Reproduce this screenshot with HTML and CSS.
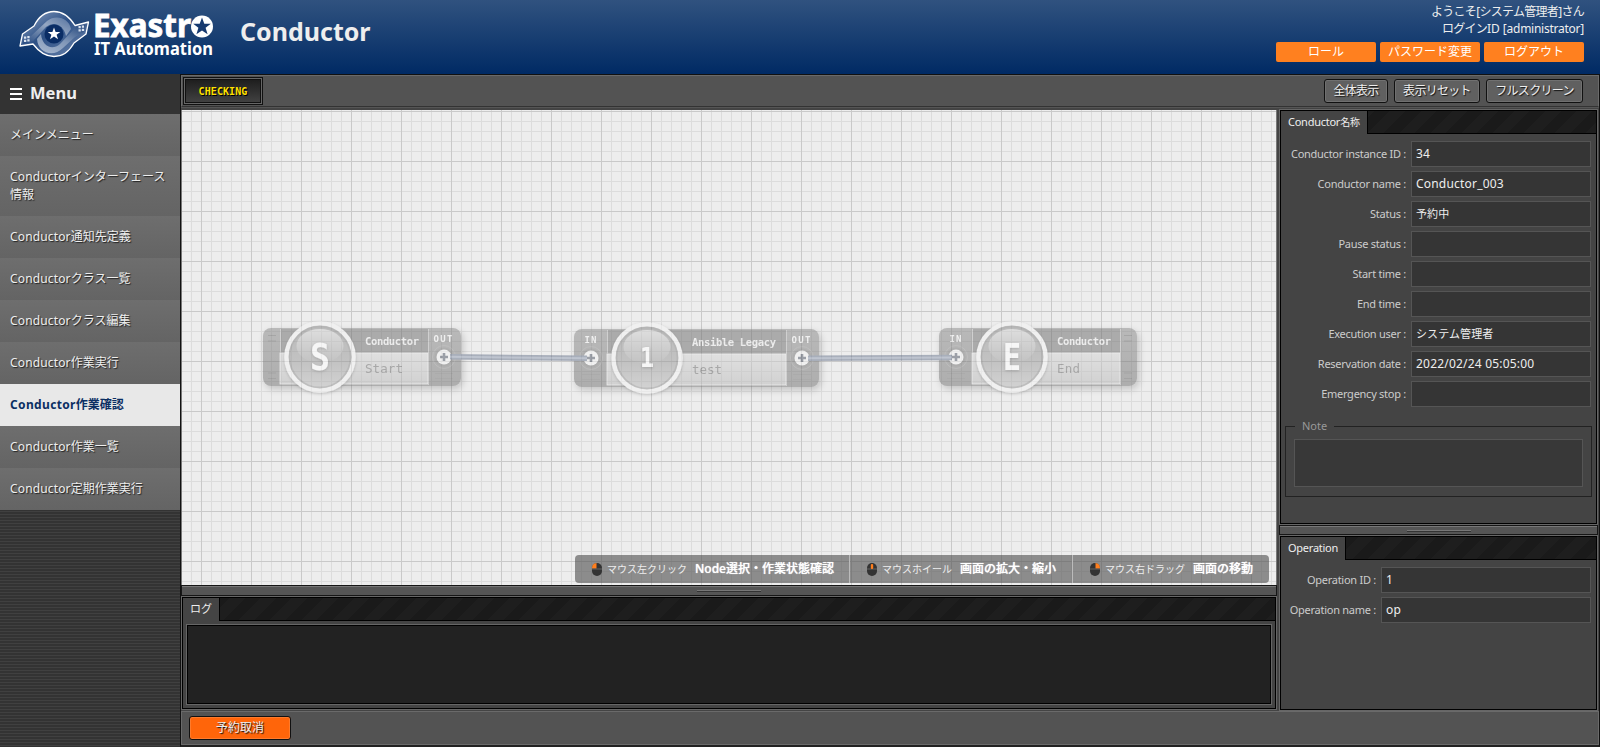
FILE: index.html
```html
<!DOCTYPE html>
<html lang="ja">
<head>
<meta charset="utf-8">
<title>Conductor</title>
<link rel="stylesheet" href="styles.css">
</head>
<body>
<header class="header">
  <svg class="logo" width="220" height="74" viewBox="0 0 220 74">
    <defs>
      <linearGradient id="lg1" x1="0" y1="0" x2="1" y2="1"><stop offset="0" stop-color="#8da3c4"/><stop offset=".45" stop-color="#2d5085"/><stop offset="1" stop-color="#7089b0"/></linearGradient>
      <linearGradient id="lg2" x1="0" y1="1" x2="1" y2="0"><stop offset="0" stop-color="#c3cfdf"/><stop offset=".5" stop-color="#8fa3c0"/><stop offset="1" stop-color="#173c74"/></linearGradient>
      <linearGradient id="lg3" x1="0" y1="1" x2="1" y2="0"><stop offset="0" stop-color="#1d427b"/><stop offset=".6" stop-color="#a9b8ce"/><stop offset="1" stop-color="#5f7ba6"/></linearGradient>
    </defs>
    <path d="M20 46L22.500 34L34 26C39 16 46 11.500 54 11.500C62 11.500 69 16 75 25.500L88.500 22L86 34L74 43C69 52 62 56.500 54 56.500C45 56.500 39 52 33 44Z" fill="url(#lg1)" stroke="#fff" stroke-width="1.300" stroke-linejoin="round"/>
    <path d="M31 36L47 21C56 14 69 18 71 29L66 36C64 26 55 20 46 27L33 41L23 44L25 35Z" fill="url(#lg3)" opacity=".8"/>
    <path d="M85 25L76 27L60 44C52 51 42 46 41 34L37 39C38 53 53 58 63 48L75 37L84 32Z" fill="url(#lg2)" opacity=".8"/>
    <circle cx="54" cy="34" r="9.500" fill="#0a2d65"/>
    <path d="M54 27.500l1.600 4.500h4.700l-3.700 2.800 1.400 4.500-4-2.700-4 2.700 1.400-4.500-3.700-2.800h4.700z" fill="#fff"/>
    <path d="M24 36.500h2.300v2.300h-2.300zm3.300-.5h2.300v2.300h-2.300zm-3.300 3.800h2.300v2.300h-2.300zm3.300-.5h2.300v2.300h-2.300zM78.500 26h2.300v2.300h-2.300zm3.300-.5h2.300v2.300h-2.300zm-3.300 3.800h2.300v2.300h-2.300zm3.300-.5h2.300v2.300h-2.300z" fill="#dbe4f0"/>
    <text class="logo-main" x="93" y="36.500" textLength="98" lengthAdjust="spacingAndGlyphs">Exastr</text>
    <circle cx="202" cy="26.500" r="11" fill="#fff"/>
    <path d="M202 17.500l2.300 6.300h6.500l-5.200 4 2 6.500-5.600-3.900-5.600 3.900 2-6.500-5.200-4h6.500z" fill="#16396f"/>
    <text class="logo-sub" x="94" y="55" textLength="119" lengthAdjust="spacingAndGlyphs">IT Automation</text>
  </svg>
  <h1 class="title">Conductor</h1>
  <div class="user">
    <div class="user-line greet">ようこそ[システム管理者]さん</div>
    <div class="user-line"><span class="jp">ログイン</span>ID <span class="wide">[administrator]</span></div>
    <div class="user-buttons"><button>ロール</button><button>パスワード変更</button><button>ログアウト</button></div>
  </div>
</header>
<div class="body">
  <nav class="menu">
    <div class="menu-head"><i class="burger"></i><span>Menu</span></div>
    <a>メインメニュー</a>
    <a><span class="lt">Conductor</span>インターフェース<br>情報</a>
    <a><span class="lt">Conductor</span>通知先定義</a>
    <a><span class="lt">Conductor</span>クラス一覧</a>
    <a><span class="lt">Conductor</span>クラス編集</a>
    <a><span class="lt">Conductor</span>作業実行</a>
    <a class="active"><span class="bold-lt">Conductor</span>作業確認</a>
    <a><span class="lt">Conductor</span>作業一覧</a>
    <a><span class="lt">Conductor</span>定期作業実行</a>
  </nav>
  <main class="editor">
    <div class="toolbar">
      <div class="status">CHECKING</div>
      <div class="tools"><button class="b1">全体表示</button><button class="b2">表示リセット</button><button class="b3">フルスクリーン</button></div>
    </div>
    <div class="work">
      <div class="left">
        <div class="canvas">
          <svg class="nodes" width="1094" height="475" viewBox="182 110 1094 475">
            <defs>
              <linearGradient id="frame" x1="0" y1="0" x2="0" y2="1"><stop offset="0" stop-color="#868686"/><stop offset="1" stop-color="#707070"/></linearGradient>
              <linearGradient id="body" x1="0" y1="0" x2="0" y2="1"><stop offset="0" stop-color="#d4d4d4"/><stop offset="1" stop-color="#b6b6b6"/></linearGradient>
              <linearGradient id="ball" x1="0" y1="0" x2="0" y2="1"><stop offset="0" stop-color="#888"/><stop offset=".55" stop-color="#989898"/><stop offset="1" stop-color="#bcbcbc"/></linearGradient>
              <linearGradient id="gloss" x1="0" y1="0" x2="0" y2="1"><stop offset="0" stop-color="#fff" stop-opacity=".6"/><stop offset="1" stop-color="#fff" stop-opacity="0"/></linearGradient>
              <filter id="drop" x="-20%" y="-30%" width="140%" height="180%"><feDropShadow dx="2" dy="3" stdDeviation="3.500" flood-opacity=".35"/></filter>
              <filter id="soft" x="-20%" y="-20%" width="140%" height="150%"><feDropShadow dx="0" dy="1" stdDeviation="1.500" flood-opacity=".4"/></filter>
              <g id="port"><circle r="11.500" fill="none" stroke="#999" opacity=".6"/><circle r="9.500" fill="#666" opacity=".5"/><circle r="7.500" fill="#f4f4f4"/></g>
              <path id="plus" d="M-4 0H4M0-4V4" stroke="#4c5464" stroke-width="2.600"/>
              <g id="orb"><circle r="33.500" fill="url(#ball)" stroke="#f4f4f4" stroke-width="4.500" filter="url(#soft)"/><circle r="30.500" fill="none" stroke="#777" stroke-width="1.800" opacity=".6"/><ellipse cy="-11" rx="23.500" ry="17" fill="url(#gloss)"/></g>
              <path id="slits" d="M-9 .5H9M-9 5.500H9" stroke="#666" opacity=".6"/>
              <path id="slit-s" d="M-4 0H4M-4 5.500H4" stroke="#555" opacity=".7"/>
            </defs>
            <g class="faded">
              <g filter="url(#drop)"><rect x="263" y="328" width="198" height="58" rx="8" fill="url(#frame)"/></g>
              <rect x="280" y="329" width="148" height="24" fill="#6c6c6c"/><rect x="280" y="353" width="148" height="31" fill="url(#body)" stroke="#eee" stroke-width=".8"/>
              <path d="M280.500 329V353M428.500 329V385" stroke="#b4b4b4"/>
              <use href="#slit-s" x="272" y="335.500"/><use href="#slit-s" x="272" y="373"/><use href="#slits" x="444" y="373"/>
              <use href="#orb" x="320" y="357"/>
              <text class="n-letter" x="320" y="370" textLength="20" lengthAdjust="spacingAndGlyphs">S</text>
              <text class="n-type" x="365" y="345" textLength="54">Conductor</text><text class="n-name" x="365" y="373" textLength="38">Start</text>
              <text class="n-io" x="443" y="342" textLength="19">OUT</text>

              <g filter="url(#drop)"><rect x="574" y="329" width="245" height="58" rx="8" fill="url(#frame)"/></g>
              <rect x="607" y="330" width="179" height="24" fill="#6c6c6c"/><rect x="607" y="354" width="179" height="31" fill="url(#body)" stroke="#eee" stroke-width=".8"/>
              <path d="M607.500 330V354M786.500 330V386" stroke="#b4b4b4"/>
              <use href="#slits" x="591" y="374"/><use href="#slits" x="802" y="374"/>
              <use href="#orb" x="647" y="358"/>
              <text class="n-letter n-number" x="647" y="367" textLength="14" lengthAdjust="spacingAndGlyphs">1</text>
              <text class="n-type" x="692" y="346" textLength="84">Ansible Legacy</text><text class="n-name" x="692" y="374" textLength="30">test</text>
              <text class="n-io" x="590.500" y="343" textLength="12">IN</text><text class="n-io" x="801" y="343" textLength="19">OUT</text>

              <g filter="url(#drop)"><rect x="939" y="328" width="198" height="58" rx="8" fill="url(#frame)"/></g>
              <rect x="972" y="329" width="148" height="24" fill="#6c6c6c"/><rect x="972" y="353" width="148" height="31" fill="url(#body)" stroke="#eee" stroke-width=".8"/>
              <path d="M972.500 329V353M1120.500 329V385" stroke="#b4b4b4"/>
              <use href="#slits" x="956" y="373"/><use href="#slit-s" x="1128" y="335.500"/><use href="#slit-s" x="1128" y="373"/>
              <use href="#orb" x="1012" y="357"/>
              <text class="n-letter" x="1012" y="370" textLength="18" lengthAdjust="spacingAndGlyphs">E</text>
              <text class="n-type" x="1057" y="345" textLength="54">Conductor</text><text class="n-name" x="1057" y="373" textLength="23">End</text>
              <text class="n-io" x="955.500" y="342" textLength="12">IN</text>
              <use href="#port" x="444" y="357"/><use href="#port" x="591" y="358"/><use href="#port" x="802" y="358"/><use href="#port" x="956" y="357"/>
              <path d="M450 356.700L587 358.300M808 358.200L952 357.500" stroke="#66728a" stroke-width="5.500"/><path d="M450 356.700L587 358.300M808 358.200L952 357.500" stroke="#919db3" stroke-width="2"/>
              <use href="#plus" x="444" y="357"/><use href="#plus" x="591" y="358"/><use href="#plus" x="802" y="358"/><use href="#plus" x="956" y="357"/>
            </g>
          </svg>
          <div class="hints">
            <div class="hint h1"><svg width="10" height="13" viewBox="0 0 10 13"><rect width="10" height="13" rx="5" fill="#333"/><path d="M4.500 0V5.500H0V5A5 5 0 0 1 4.500 0Z" fill="#ff7f1e"/><path d="M0 6H10" stroke="#777" stroke-width=".7"/></svg><small>マウス左クリック</small><b><span>Node</span>選択・作業状態確認</b></div>
            <div class="hint h2"><svg width="10" height="13" viewBox="0 0 10 13"><rect width="10" height="13" rx="5" fill="#333"/><path d="M0 6H10" stroke="#777" stroke-width=".7"/><rect x="3.800" y="1" width="2.400" height="5" rx="1" fill="#ff7f1e"/></svg><small>マウスホイール</small><b>画面の拡大・縮小</b></div>
            <div class="hint h3"><svg width="10" height="13" viewBox="0 0 10 13"><rect width="10" height="13" rx="5" fill="#333"/><path d="M5.500 0V5.500H10V5A5 5 0 0 0 5.500 0Z" fill="#ff7f1e"/><path d="M0 6H10" stroke="#777" stroke-width=".7"/></svg><small>マウス右ドラッグ</small><b>画面の移動</b></div>
          </div>
        </div>
        <div class="split"></div>
        <section class="panel log">
          <div class="tabs"><div class="tab">ログ</div></div>
          <div class="log-body"></div>
        </section>
      </div>
      <div class="right">
        <section class="panel info">
          <div class="tabs"><div class="tab">Conductor<span class="tab-jp">名称</span></div></div>
          <dl class="fields">
            <dt>Conductor instance ID :</dt><dd>34</dd>
            <dt>Conductor name :</dt><dd>Conductor_003</dd>
            <dt>Status :</dt><dd class="jp11">予約中</dd>
            <dt>Pause status :</dt><dd></dd>
            <dt>Start time :</dt><dd></dd>
            <dt>End time :</dt><dd></dd>
            <dt>Execution user :</dt><dd class="jp11">システム管理者</dd>
            <dt>Reservation date :</dt><dd>2022/02/24 05:05:00</dd>
            <dt>Emergency stop :</dt><dd></dd>
          </dl>
          <fieldset class="note"><legend>Note</legend><div></div></fieldset>
        </section>
        <div class="split"></div>
        <section class="panel operation">
          <div class="tabs"><div class="tab">Operation</div></div>
          <dl class="fields op">
            <dt>Operation ID :</dt><dd>1</dd>
            <dt>Operation name :</dt><dd>op</dd>
          </dl>
        </section>
      </div>
    </div>
    <footer class="footer"><button>予約取消</button></footer>
  </main>
</div>
</body>
</html>
```
FILE: styles.css
```css
* { box-sizing: border-box; }
body { margin: 0; width: 1600px; height: 747px; overflow: hidden; display: flex; flex-direction: column; background: #333; color: #eee; font: 12px/18px "Noto Sans", "Noto Sans CJK JP", sans-serif; }
button { font: inherit; padding: 0; margin: 0; border: 0; }
.header { height: 74px; flex: none; display: flex; background: linear-gradient(#30527f, #002a64); }
.logo { flex: none; overflow: visible; }
.logo-main { font: bold 32.500px "Noto Sans", sans-serif; fill: #fff; stroke: #fff; stroke-width: .8px; }
.logo-sub { font: bold 18.500px "Noto Sans", sans-serif; fill: #fff; }
.title { margin: 13px 0 0 20px; font-size: 25px; line-height: 36px; letter-spacing: 0; }
.user { margin: 3px 16px 0 auto; text-align: right; }
.user-line { height: 17px; line-height: 17px; }
.greet { letter-spacing: -.7px; }
.jp { letter-spacing: -.8px; }
.wide { letter-spacing: -.25px; }
.user-buttons { display: flex; gap: 4px; margin-top: 5px; }
.user-buttons button { width: 100px; height: 20px; line-height: 20px; border-radius: 2px; background: #ff801f; color: #fff; }
.body { display: flex; flex: 1; min-height: 0; }
.menu { width: 180px; flex: none; background: repeating-linear-gradient(#333 0 2px, #404040 2px 3px); }
.menu-head { height: 40px; background: #333; display: flex; align-items: center; gap: 8px; padding: 0 10px 3px; font-weight: bold; font-size: 16.500px; }
.burger { width: 12px; height: 12px; margin-top: 2px; border-top: 2px solid #fff; border-bottom: 2px solid #fff; background: linear-gradient(#fff, #fff) 0 3px / 12px 2px no-repeat; }
.menu a { display: block; padding: 12px 10px; background: linear-gradient(#6e6e6e, #646464); text-shadow: 1px 1px 1px #222; }
.lt { letter-spacing: .15px; }
.bold-lt { letter-spacing: .35px; }
.menu .active { background: #e8e8e8; color: #0b2f63; font-weight: bold; text-shadow: none; }
.editor { flex: 1; min-width: 0; display: flex; flex-direction: column; background: #444; border-left: 1px solid #111; border-top: 1px solid #111; border-bottom: 2px solid #222; border-right: 1px solid #111; }
.toolbar { height: 32px; flex: none; display: flex; justify-content: space-between; align-items: center; background: #535353; border: 1px solid #6a6a6a; border-bottom-color: #333; padding: 0 15px 0 1px; }
.status { width: 80px; height: 28px; border: 1px solid #111; box-shadow: inset 0 0 0 1px #666, inset 0 0 0 2px #111; background: linear-gradient(#1b1b1b, #444); color: #ffe000; text-align: center; font: bold 10px/28px "DejaVu Sans Mono", monospace; letter-spacing: .1px; text-shadow: 1px 1px #000; }
.tools { display: flex; gap: 6px; }
.tools button, .footer button { height: 24px; border: 1px solid #111; border-radius: 3px; background: #606060; box-shadow: inset 0 0 0 1px #707070; color: #eee; line-height: 22px; text-shadow: 1px 1px 1px #111; }
.tools button { letter-spacing: -.7px; }
.tools .b1 { width: 64px; } .tools .b2 { width: 86px; } .tools .b3 { width: 97px; }
.work { flex: none; height: 603px; display: flex; gap: 2px; padding: 2px 1px 0 0; border-top: 1px solid #555; }
.left { width: 1096px; display: flex; flex-direction: column; border-left: 1px solid #777; border-right: 1px solid #777; }
.canvas { position: relative; height: 475px; overflow: hidden; background-color: #ededed; background-image: linear-gradient(90deg, #c9c9c9 1px, transparent 1px), linear-gradient(#c9c9c9 1px, transparent 1px), linear-gradient(90deg, #dcdcdc 1px, transparent 1px), linear-gradient(#dcdcdc 1px, transparent 1px); background-size: 50px 50px, 50px 50px, 10px 10px, 10px 10px; background-position: 19px 0, 0 1px, 9px 0, 0 1px; }
.nodes { display: block; }
.faded { opacity: .5; }
.n-letter { font: bold 37px "DejaVu Sans Mono", monospace; fill: #fff; text-anchor: middle; filter: url(#soft); }
.n-number { font-size: 26px; }
.n-type { font: bold 10.500px "DejaVu Sans Mono", monospace; fill: #eee; }
.n-name { font: 12.500px "DejaVu Sans Mono", monospace; fill: #666; }
.n-io { font: bold 9px "DejaVu Sans Mono", monospace; fill: #f4f4f4; text-anchor: middle; }
.hints { position: absolute; right: 7px; bottom: 2px; display: flex; height: 28px; border-radius: 4px; background: rgba(80, 80, 80, .62); }
.hint { display: flex; align-items: center; padding-left: 17px; border-right: 1px solid #bbb; white-space: nowrap; }
.hint small { font-size: 10px; margin-left: 5px; width: 80px; }
.hint b { font-size: 12px; margin-left: 8px; color: #fff; font-weight: 500; text-shadow: 0 0 1px #fff; }
.h1 { width: 275px; } .h2 { width: 223px; } .h2 small { width: 70px; } .h3 { width: 196px; border: 0; }
.split { height: 9px; flex: none; margin: 1px 0 0; background: linear-gradient(#777, #777) center 3px / 64px 1px no-repeat, linear-gradient(#333, #333) center 4px / 64px 1px no-repeat, #555; border-top: 1px solid #777; outline: 1px solid #161616; }
.panel { background: #444; border: 1px solid #000; outline: 1px solid #666; }
.tabs { height: 23px; background: repeating-linear-gradient(135deg, #1a1a1a 0 11px, #1e1e1e 11px 22px); border-bottom: 1px solid #000; }
.tab { display: inline-block; height: 23px; padding: 0 7px; background: #444; border-right: 1px solid #000; font-size: 11px; line-height: 22px; letter-spacing: -.25px; vertical-align: top; }
.tab-jp { font-size: 10px; }
.log { margin: 2px 0 0; height: 112px; display: flex; flex-direction: column; }
.log .tabs { flex: none; }
.log .tab { letter-spacing: -.1px; padding: 0 7px; }
.log-body { flex: 1; margin: 4px; background: #222; border: 1px solid #000; outline: 1px solid #666; }
.right { flex: 1; min-width: 0; padding: 0 1px; display: flex; flex-direction: column; }
.info { height: 414px; flex: none; }
.right .split { height: 8px; margin: 2px 0 0; }
.operation { height: 174px; margin-top: 2px; }
.fields { display: grid; grid-template-columns: 125px 180px; grid-auto-rows: 26px; gap: 4px 5px; margin: 7px 0 0; }
.fields.op { grid-template-columns: 95px 210px; }
.fields dt { text-align: right; color: #ccc; font-size: 11px; line-height: 25px; letter-spacing: -.26px; white-space: nowrap; }
.fields dd { margin: 0; padding: 0 4px; background: #353535; border: 1px solid #555; font-size: 12px; line-height: 23px; letter-spacing: .2px; }
.fields .jp11 { font-size: 11px; letter-spacing: .1px; }
.note { margin: 11px 4px 0; min-width: 0; height: 79px; padding: 5px 8px 8px; border: 1px solid #222; }
.note legend { padding: 0 7px; margin-left: 1px; font-size: 11px; line-height: 16px; color: #999; }
.note div { height: 48px; background: #383838; border: 1px solid #555; }
.footer { flex: 1; background: #535353; border: 1px solid #6a6a6a; padding: 4px 7px; margin-top: 1px; }
.footer button { width: 102px; background: #ff650a; box-shadow: inset 0 0 0 1px #ff7b2b; }
```
